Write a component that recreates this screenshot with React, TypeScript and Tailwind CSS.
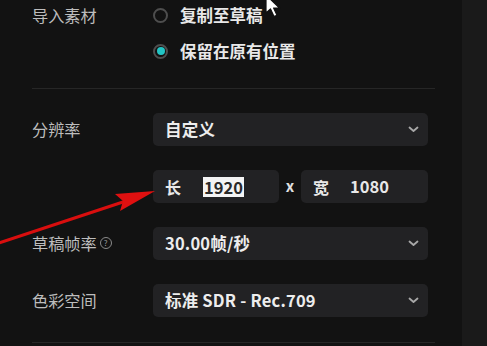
import React from "react";

const font = { fontFamily: '"Noto Sans CJK SC", "Noto Sans", sans-serif' };

function Chevron() {
  return (
    <svg width="11" height="7" viewBox="0 0 11 7" fill="none">
      <path d="M1.5 1.5 L5.5 5 L9.5 1.5" stroke="#a8a8a8" strokeWidth="1.8" strokeLinecap="round" strokeLinejoin="round" />
    </svg>
  );
}

function Radio({ checked }: { checked?: boolean }) {
  return (
    <span className="w-[15px] h-[15px] rounded-full border-[2.5px] border-[#4e4e4e] flex items-center justify-center">
      {checked && <span className="w-[8px] h-[8px] rounded-full bg-[#22c4c4]" />}
    </span>
  );
}

function Select({ value }: { value: string }) {
  return (
    <div className="w-[275px] h-[33px] rounded-[5px] bg-[#222224] flex items-center justify-between pl-[12px] pr-[9px]">
      <span className="text-[16.5px] font-bold text-[#ededed] tracking-[0.2px]">{value}</span>
      <Chevron />
    </div>
  );
}

function Row({ label, children, icon }: { label: string; children: React.ReactNode; icon?: boolean }) {
  return (
    <div className="flex items-center">
      <div className="w-[121px] flex items-center text-[16.2px] text-[#bdbdbd]">
        <span>{label}</span>
        {icon && (
          <span className="ml-[3px] w-[12px] h-[12px] rounded-full border border-[#8a8a8a] text-[8px] leading-none text-[#9a9a9a] flex items-center justify-center">?</span>
        )}
      </div>
      {children}
    </div>
  );
}

export default function App() {
  return (
    <div className="w-[487px] h-[346px] bg-[#121212] flex overflow-hidden relative" style={font}>
      <div className="w-[462px] pl-[32px] pr-[27px] flex flex-col">
        <div className="flex">
          <div className="w-[121px] h-[30px] flex items-center text-[16.2px] text-[#bdbdbd]">导入素材</div>
          <div className="flex flex-col gap-[6px]">
            <div className="h-[30px] flex items-center gap-[12px]">
              <Radio />
              <span className="text-[16.5px] font-bold text-[#e8e8e8]">复制至草稿</span>
            </div>
            <div className="h-[30px] flex items-center gap-[12px]">
              <Radio checked />
              <span className="text-[16.5px] font-bold text-[#e8e8e8]">保留在原有位置</span>
            </div>
          </div>
        </div>
        <div className="mt-[22px] h-px bg-[#262626]" />
        <div className="mt-[24px]">
          <Row label="分辨率">
            <Select value="自定义" />
          </Row>
        </div>
        <div className="mt-[24px] flex">
          <div className="w-[121px]" />
          <div className="w-[275px] flex items-center">
            <div className="w-[126px] h-[33px] rounded-[5px] bg-[#222224] flex items-center pl-[12px]">
              <span className="text-[16px] font-bold text-[#e8e8e8]">长</span>
              <span className="ml-[22px] px-[1px] bg-[#f4f4f4] text-[#2a2a2a] text-[16.5px] font-bold leading-[20px]">1920</span>
            </div>
            <div className="flex-1 flex justify-center text-[15px] font-bold text-[#e0e0e0]">x</div>
            <div className="w-[127px] h-[33px] rounded-[5px] bg-[#222224] flex items-center pl-[12px]">
              <span className="text-[16px] font-bold text-[#e8e8e8]">宽</span>
              <span className="ml-[21px] text-[16.5px] font-bold text-[#e8e8e8]">1080</span>
            </div>
          </div>
        </div>
        <div className="mt-[24px]">
          <Row label="草稿帧率" icon>
            <Select value="30.00帧/秒" />
          </Row>
        </div>
        <div className="mt-[24px]">
          <Row label="色彩空间">
            <Select value="标准 SDR - Rec.709" />
          </Row>
        </div>
        <div className="mt-[25px] h-px bg-[#262626]" />
      </div>
      <div className="flex-1 bg-[#1a1a1a]" />

      {/* red annotation arrow */}
      <svg className="absolute left-0 top-0 pointer-events-none" width="487" height="346" viewBox="0 0 487 346">
        <line x1="-4" y1="244" x2="126" y2="201" stroke="#d80e0e" strokeWidth="3.2" strokeLinecap="round" />
        <polygon points="155,191 115,194 123,201 120,211" fill="#e01010" />
      </svg>

      {/* mouse cursor */}
      <svg className="absolute pointer-events-none" style={{ left: 264, top: -6 }} width="24" height="28" viewBox="0 0 24 28">
        <path d="M2 1 L2 19 L6.5 15 L10 22.5 L13 21.2 L9.6 14 L15.5 14 Z" fill="#ffffff" stroke="#111" strokeWidth="1.2" strokeLinejoin="round" />
      </svg>
    </div>
  );
}
